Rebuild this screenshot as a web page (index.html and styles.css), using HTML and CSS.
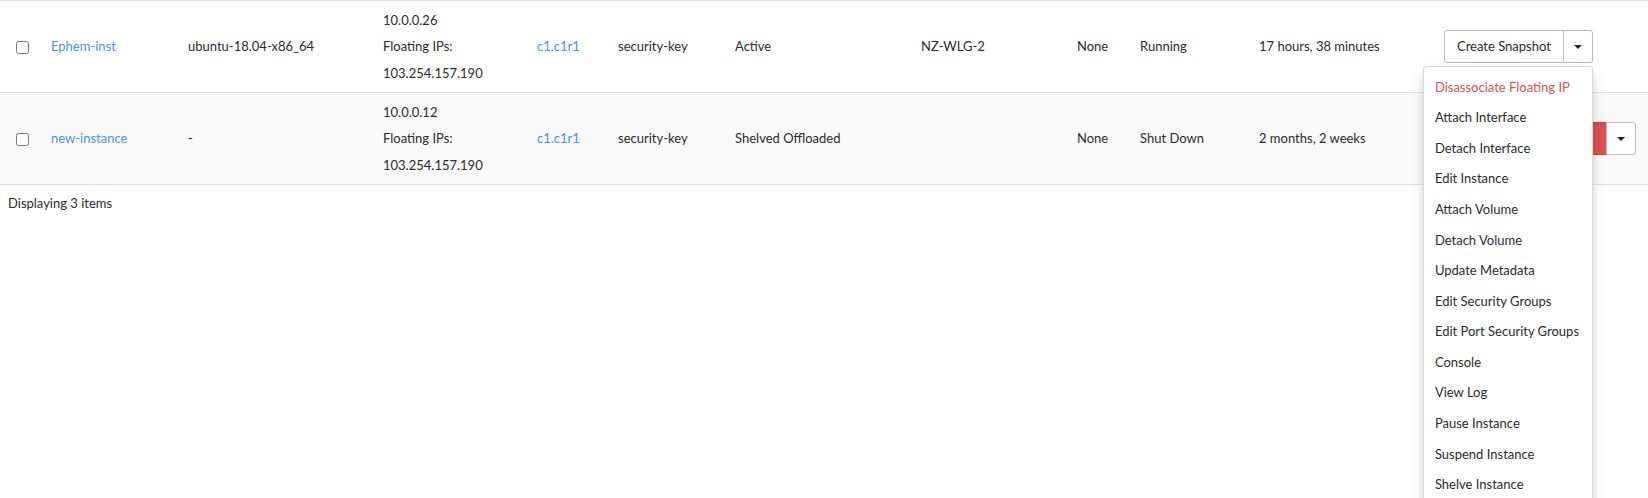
FILE: index.html
```html
<!DOCTYPE html>
<html>
<head>
<meta charset="utf-8">
<link rel="stylesheet" href="styles.css">
</head>
<body>
<div class="page">
<div class="table">
  <div class="row">
    <div class="cell"><input type="checkbox" class="chk"></div>
    <div class="cell"><a class="link" href="#">Ephem-inst</a></div>
    <div class="cell">ubuntu-18.04-x86_64</div>
    <div class="cell ips">
      <ul class="iplist">
        <li>10.0.0.26</li>
        <li>Floating IPs:</li>
        <li>103.254.157.190</li>
      </ul>
    </div>
    <div class="cell"><a class="link" href="#">c1.c1r1</a></div>
    <div class="cell">security-key</div>
    <div class="cell">Active</div>
    <div class="cell">NZ-WLG-2</div>
    <div class="cell">None</div>
    <div class="cell">Running</div>
    <div class="cell">17 hours, 38 minutes</div>
    <div class="cell">
      <div class="btn-group">
        <button class="btn">Create Snapshot</button>
        <button class="btn toggle"><span class="caret"></span></button>
        <ul class="menu">
          <li class="item danger">Disassociate Floating IP</li>
          <li class="item">Attach Interface</li>
          <li class="item">Detach Interface</li>
          <li class="item">Edit Instance</li>
          <li class="item">Attach Volume</li>
          <li class="item">Detach Volume</li>
          <li class="item">Update Metadata</li>
          <li class="item">Edit Security Groups</li>
          <li class="item">Edit Port Security Groups</li>
          <li class="item">Console</li>
          <li class="item">View Log</li>
          <li class="item">Pause Instance</li>
          <li class="item">Suspend Instance</li>
          <li class="item">Shelve Instance</li>
        </ul>
      </div>
    </div>
  </div>
  <div class="row striped">
    <div class="cell"><input type="checkbox" class="chk"></div>
    <div class="cell"><a class="link" href="#">new-instance</a></div>
    <div class="cell">-</div>
    <div class="cell ips">
      <ul class="iplist">
        <li>10.0.0.12</li>
        <li>Floating IPs:</li>
        <li>103.254.157.190</li>
      </ul>
    </div>
    <div class="cell"><a class="link" href="#">c1.c1r1</a></div>
    <div class="cell">security-key</div>
    <div class="cell">Shelved Offloaded</div>
    <div class="cell"></div>
    <div class="cell">None</div>
    <div class="cell">Shut Down</div>
    <div class="cell">2 months, 2 weeks</div>
    <div class="cell">
      <div class="btn-group">
        <button class="btn btn-danger">Disassociate Floating IP</button>
        <button class="btn toggle"><span class="caret"></span></button>
      </div>
    </div>
  </div>
  <div class="footer">Displaying 3 items</div>
</div>
</div>
</body>
</html>
```

FILE: styles.css
```css
html, body {
  margin: 0;
  padding: 0;
  background: #fff;
}

body {
  font-family: Lato, "Open Sans", sans-serif;
  font-size: 13px;
  line-height: 1.42857;
  color: #2b2b2b;
}

.page {
  width: 1648px;
  height: 498px;
  overflow: hidden;
}

.table {
  width: 1648px;
}

.row {
  display: grid;
  grid-template-columns: 43px 137px 195px 154px 81px 117px 186px 156px 63px 119px 185px 1fr;
  align-items: center;
  border-top: 1px solid #ddd;
  background: #fff;
}

.row.striped {
  background: #f9f9f9;
}

.cell {
  padding: 8px;
  white-space: nowrap;
}

.cell.ips {
  padding: 5.5px 8px;
}

.iplist {
  list-style: none;
  margin: 0;
  padding: 0;
  line-height: 26.67px;
}

.chk {
  margin: 0 0 0 8px;
  width: 13px;
  height: 13px;
  display: block;
  position: relative;
  top: 1px;
}

.link {
  color: #4a94d8;
  text-decoration: none;
}

.footer {
  border-top: 1px solid #ddd;
  padding: 9px 8px 8px;
}

.btn-group {
  position: relative;
  display: inline-flex;
  vertical-align: middle;
}

.btn {
  font-family: inherit;
  font-size: 13px;
  line-height: 1.42857;
  padding: 6px 12px;
  margin: 0;
  background: #fff;
  color: #2b2b2b;
  border: 1px solid #bbb;
  border-radius: 3px;
  cursor: pointer;
}

.btn-group .btn:first-child {
  border-top-right-radius: 0;
  border-bottom-right-radius: 0;
}

.btn-group .toggle {
  margin-left: -1px;
  padding: 6px 10px;
  border-top-left-radius: 0;
  border-bottom-left-radius: 0;
  display: flex;
  align-items: center;
}

.btn-danger {
  background: #d9534f;
  border-color: #d43f3a;
  color: #fff;
  padding: 6px 13px;
}

.caret {
  display: inline-block;
  width: 0;
  height: 0;
  border-top: 4px solid #222;
  border-left: 4px solid transparent;
  border-right: 4px solid transparent;
}

.menu {
  position: absolute;
  top: calc(100% + 3px);
  right: 0;
  z-index: 10;
  min-width: 170px;
  box-sizing: border-box;
  margin: 0;
  padding: 5px 0;
  list-style: none;
  background: #fff;
  border: 1px solid rgba(0, 0, 0, 0.15);
  border-radius: 4px;
  box-shadow: 0 6px 12px rgba(0, 0, 0, 0.175);
}

.item {
  padding: 6px 11px;
  color: #2b2b2b;
  white-space: nowrap;
}

.item.danger {
  color: #d9534f;
}
```
